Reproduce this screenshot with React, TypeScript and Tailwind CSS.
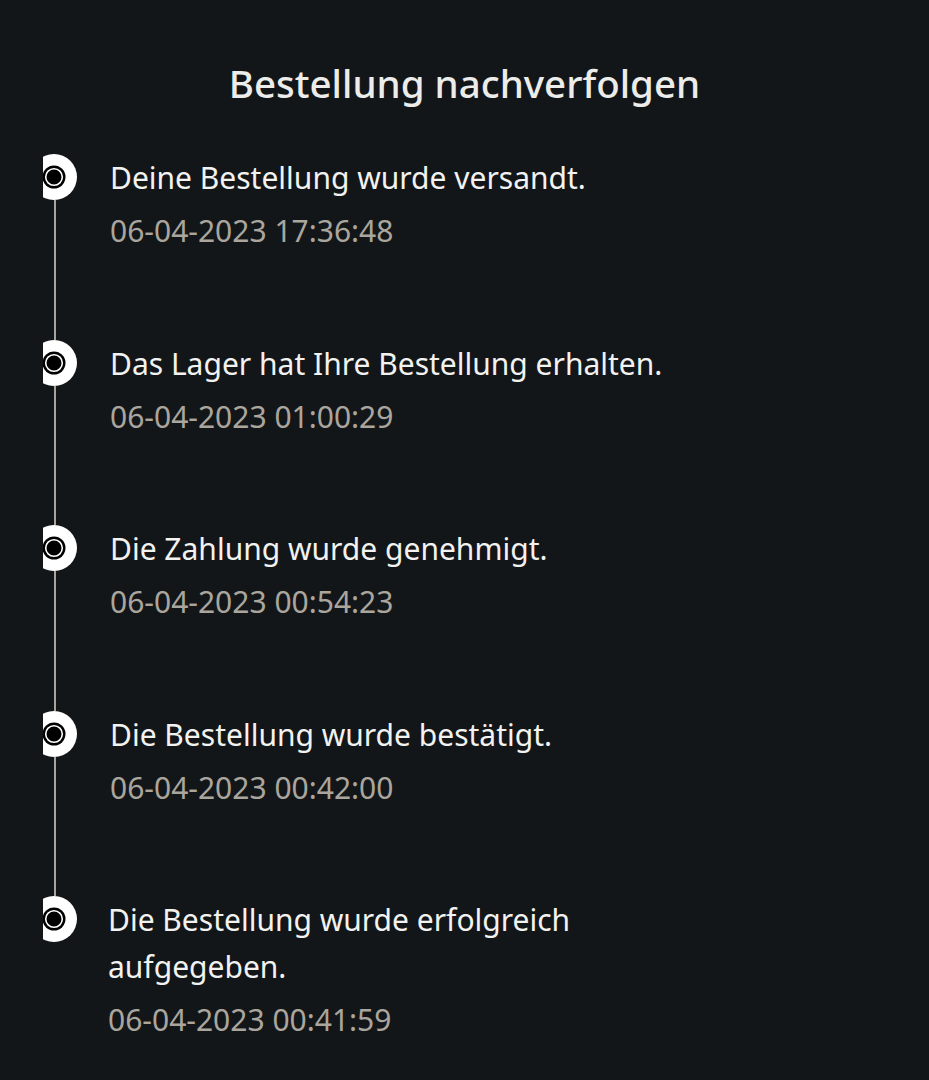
import React from "react";

const steps = [
    { text: "Deine Bestellung wurde versandt.", date: "06-04-2023 17:36:48" },
    { text: "Das Lager hat Ihre Bestellung erhalten.", date: "06-04-2023 01:00:29" },
    { text: "Die Zahlung wurde genehmigt.", date: "06-04-2023 00:54:23" },
    { text: "Die Bestellung wurde bestätigt.", date: "06-04-2023 00:42:00" },
    { text: "Die Bestellung wurde erfolgreich aufgegeben.", date: "06-04-2023 00:41:59" },
];

function Marker() {
    return (
        <div className="w-[35px] h-[46px] overflow-hidden shrink-0">
            <svg width="46" height="46" viewBox="0 0 46 46" className="-ml-[12px]">
                <circle cx="23" cy="23" r="23" fill="#ffffff" />
                <circle cx="23" cy="23" r="11.5" fill="#000000" />
                <circle cx="23" cy="23" r="8.3" fill="#000000" stroke="#ffffff" strokeWidth="1.6" />
            </svg>
        </div>
    );
}

export default function App() {
    return (
        <div
            className="w-[929px] h-[1080px] bg-[#131619] overflow-hidden"
            style={{ fontFamily: '"Noto Sans", "Open Sans", sans-serif' }}
        >
            <h1 className="pt-[55px] text-center text-[38.5px] leading-[56px] font-medium text-[#ececea]">
                Bestellung nachverfolgen
            </h1>
            <div className="mt-[43px] pl-[43px] flex flex-col">
                {steps.map((step, i) => {
                    const last = i === steps.length - 1;
                    return (
                        <div key={i} className={`flex ${last ? "" : "h-[185.5px]"}`}>
                            <div className="flex flex-col w-[35px] shrink-0">
                                <Marker />
                                {!last && <div className="ml-[11px] w-[2px] flex-1 bg-[#a9a49b]" />}
                            </div>
                            <div className={`${last ? "ml-[30px]" : "ml-[32px]"} w-[620px]`}>
                                <div className="text-[30px] leading-[47px] text-[#f2f2f0]">{step.text}</div>
                                <div className="mt-[6px] text-[30px] leading-[47px] text-[#aaa69e]">{step.date}</div>
                            </div>
                        </div>
                    );
                })}
            </div>
        </div>
    );
}
